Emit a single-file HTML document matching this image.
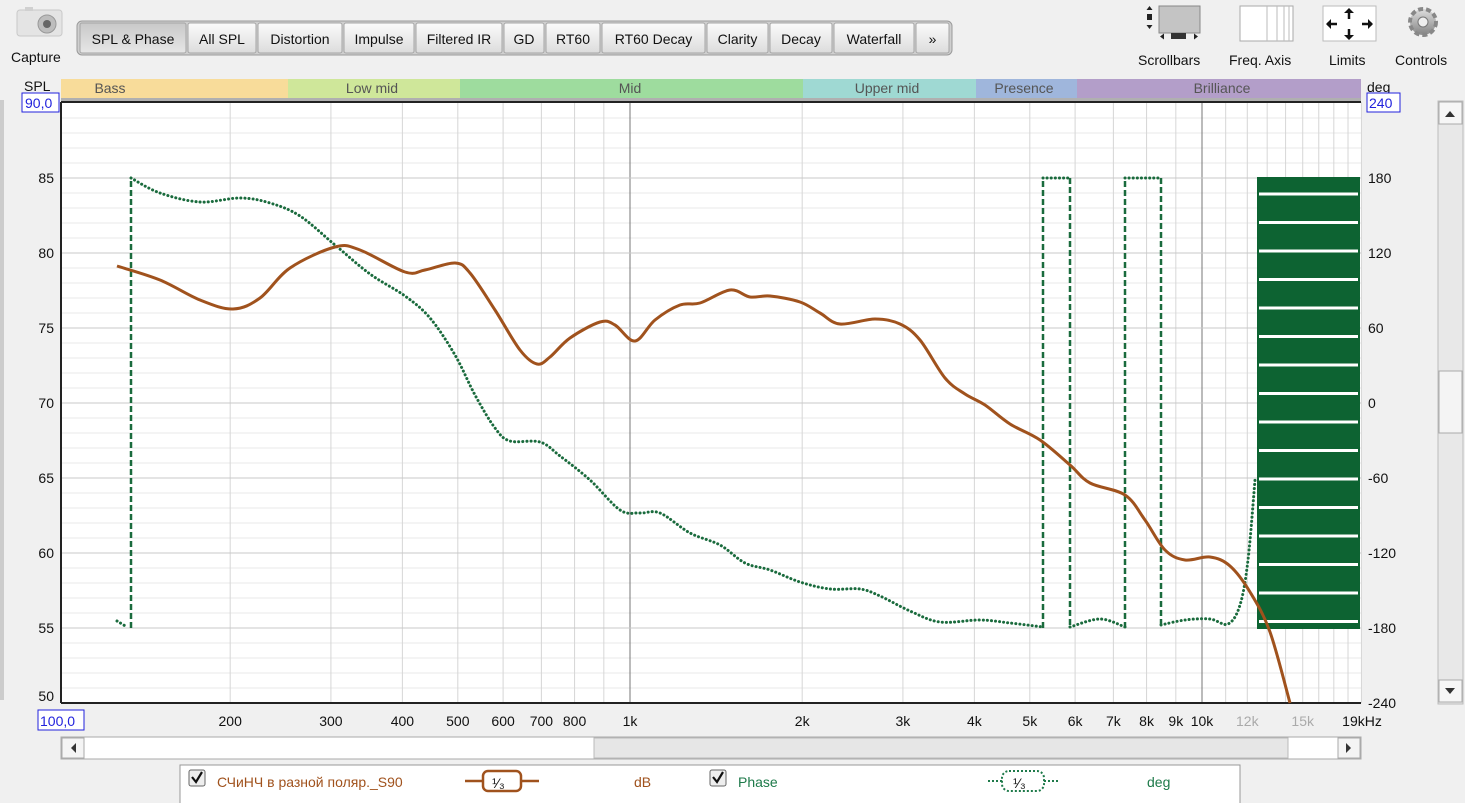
<!DOCTYPE html>
<html><head><meta charset="utf-8">
<style>
html,body{margin:0;padding:0;width:1465px;height:803px;overflow:hidden;background:#f0f0f0;font-family:"Liberation Sans",Arial,sans-serif;}
svg{position:absolute;left:0;top:0}
</style></head>
<body>
<svg id="s" width="1465" height="803" xmlns="http://www.w3.org/2000/svg" font-family="Liberation Sans, Arial, sans-serif">
<defs>
<linearGradient id="tab" x1="0" y1="0" x2="0" y2="1"><stop offset="0" stop-color="#fbfbfb"/><stop offset="1" stop-color="#dcdcdc"/></linearGradient>
<linearGradient id="tabS" x1="0" y1="0" x2="0" y2="1"><stop offset="0" stop-color="#c8c8c8"/><stop offset="1" stop-color="#e6e6e6"/></linearGradient>
<linearGradient id="gear" x1="0" y1="0" x2="0" y2="1"><stop offset="0" stop-color="#d8d8d8"/><stop offset="1" stop-color="#8a8a8a"/></linearGradient>
</defs>
<!-- capture icon -->
<rect x="17" y="10" width="45" height="26" rx="3" fill="#e4e4e4" stroke="#c9c9c9"/>
<rect x="25" y="7" width="8" height="4" fill="#d0d0d0"/>
<circle cx="47" cy="24" r="9" fill="#bdbdbd" stroke="#999"/>
<circle cx="47" cy="24" r="4" fill="#666"/>
<text x="11" y="62" font-size="14" fill="#111">Capture</text>
<!-- tabs -->
<rect x="77" y="21" width="875" height="34" rx="5" fill="#cfcfcf" stroke="#9a9a9a"/>
<g id="tabs"></g>
<!-- right icons -->
<rect x="1159" y="6" width="41" height="27" fill="#c4c4c4" stroke="#888"/>
<rect x="1147" y="14" width="5" height="6" fill="#222"/>
<path d="M1149.5 6 l-3 4 h6z M1149.5 29 l-3 -4 h6z M1160 36.5 l4 -3 v6z M1198 36.5 l-4 -3 v6z" fill="#222"/>
<rect x="1171" y="33" width="15" height="6" fill="#333"/>
<text x="1138" y="65" font-size="14" fill="#111">Scrollbars</text>
<rect x="1240" y="6" width="53" height="35" fill="#fff" stroke="#aaa"/>
<path d="M1267 6v35M1277 6v35M1284 6v35M1289 6v35" stroke="#bbb"/>
<text x="1229" y="65" font-size="14" fill="#111">Freq. Axis</text>
<rect x="1323" y="6" width="53" height="35" fill="#fff" stroke="#bbb"/>
<g stroke="#111" stroke-width="2.5" fill="none"><path d="M1327 24h10M1362 24h10M1349 10v9M1349 29v9"/></g>
<g fill="#111"><path d="M1326 24l5-5v10zM1373 24l-5-5v10zM1349 8l-5 5h10zM1349 40l-5-5h10z"/></g>
<text x="1329" y="65" font-size="14" fill="#111">Limits</text>
<circle cx="1423" cy="22" r="13" fill="url(#gear)" stroke="#888" stroke-dasharray="5 3" stroke-width="4"/>
<circle cx="1423" cy="22" r="11" fill="url(#gear)"/>
<circle cx="1423" cy="22" r="5" fill="#eee" stroke="#777"/>
<text x="1395" y="65" font-size="14" fill="#111">Controls</text>
<!-- bands -->
<g font-size="14" fill="#555" text-anchor="middle">
<rect x="61" y="79" width="227" height="19" fill="#f8dc9a"/><text x="110" y="93">Bass</text>
<rect x="288" y="79" width="172" height="19" fill="#cfe79a"/><text x="372" y="93">Low mid</text>
<rect x="460" y="79" width="343" height="19" fill="#9edc9e"/><text x="630" y="93">Mid</text>
<rect x="803" y="79" width="173" height="19" fill="#9fd9d3"/><text x="887" y="93">Upper mid</text>
<rect x="976" y="79" width="101" height="19" fill="#9fb6dc"/><text x="1024" y="93">Presence</text>
<rect x="1077" y="79" width="284" height="19" fill="#b39ec9"/><text x="1222" y="93">Brilliance</text>
</g>
<rect x="61" y="98" width="1300" height="3" fill="#b0b0b0"/>
<text x="24" y="91" font-size="14" fill="#111">SPL</text>
<text x="1367" y="92" font-size="14" fill="#111">deg</text>
<!-- plot -->
<rect x="61" y="102" width="1300" height="601" fill="#fff"/>
<g id="grid"></g>
<line x1="61" y1="102" x2="1361" y2="102" stroke="#222" stroke-width="2"/>
<line x1="61" y1="703" x2="1361" y2="703" stroke="#222" stroke-width="2"/>
<line x1="61" y1="102" x2="61" y2="703" stroke="#222" stroke-width="2"/>
<g id="curves"></g>
<g id="labels" font-size="14" fill="#111"></g>
<rect x="22" y="93" width="37" height="19" fill="#fff" stroke="#2222dd"/>
<text x="25" y="108" font-size="14" fill="#2222dd">90,0</text>
<rect x="1367" y="93" width="33" height="19" fill="#fff" stroke="#2222dd"/>
<text x="1369" y="108" font-size="14" fill="#2222dd">240</text>
<rect x="38" y="710" width="46" height="20" fill="#fff" stroke="#2222dd"/>
<text x="40" y="726" font-size="14" fill="#2222dd">100,0</text>
<!-- right scrollbar -->
<rect x="1438" y="101" width="25" height="603" fill="#e8e8e8" stroke="#bbb"/>
<rect x="1439" y="102" width="23" height="22" fill="#f6f6f6" stroke="#aaa"/>
<path d="M1445 117l5-6 5 6z" fill="#333"/>
<rect x="1439" y="371" width="23" height="62" fill="#f4f4f4" stroke="#aaa"/>
<rect x="1439" y="680" width="23" height="22" fill="#f6f6f6" stroke="#aaa"/>
<path d="M1445 688l5 6 5-6z" fill="#333"/>
<rect x="0" y="100" width="4" height="600" fill="#ccc"/>
<!-- bottom scrollbar -->
<rect x="61" y="737" width="1300" height="22" fill="#fff" stroke="#aaa"/>
<rect x="62" y="738" width="22" height="20" fill="#f4f4f4" stroke="#aaa"/>
<path d="M76 743l-5 5 5 5z" fill="#333"/>
<rect x="594" y="738" width="694" height="20" fill="#e6e6e6" stroke="#bbb"/>
<rect x="1338" y="738" width="22" height="20" fill="#f4f4f4" stroke="#aaa"/>
<path d="M1346 743l5 5-5 5z" fill="#333"/>
<!-- legend -->
<rect x="180" y="765" width="1060" height="40" fill="#fff" stroke="#999"/>
<rect x="189" y="770" width="16" height="16" rx="2" fill="#eee" stroke="#666"/>
<path d="M192 777l4 5 6-10" stroke="#111" stroke-width="2.2" fill="none"/>
<text x="217" y="787" font-size="14" fill="#a0521d">СЧиНЧ в разной поляр._S90</text>
<path d="M465 781h18M521 781h18" stroke="#a0521d" stroke-width="2.5"/>
<rect x="483" y="771" width="38" height="20" rx="5" fill="#fff" stroke="#a0521d" stroke-width="2.5"/>
<text x="492" y="788" font-size="14" fill="#111">¹⁄₃</text>
<text x="634" y="787" font-size="14" fill="#a0521d">dB</text>
<rect x="710" y="770" width="16" height="16" rx="2" fill="#eee" stroke="#666"/>
<path d="M713 777l4 5 6-10" stroke="#111" stroke-width="2.2" fill="none"/>
<text x="738" y="787" font-size="14" fill="#1e7a4a">Phase</text>
<path d="M988 781h14M1044 781h14" stroke="#1e7a4a" stroke-width="2" stroke-dasharray="2 2"/>
<rect x="1002" y="771" width="42" height="20" rx="7" fill="#fff" stroke="#1e7a4a" stroke-width="2" stroke-dasharray="2 2"/>
<text x="1013" y="788" font-size="14" fill="#111">¹⁄₃</text>
<text x="1147" y="787" font-size="14" fill="#1e7a4a">deg</text>
</svg>
<script>
var NS="http://www.w3.org/2000/svg";
function el(p,t,a,txt){var e=document.createElementNS(NS,t);for(var k in a)e.setAttribute(k,a[k]);if(txt!=null)e.textContent=txt;document.getElementById(p).appendChild(e);return e;}
function X(f){return 630+572*Math.log10(f/1000);}
// tabs
var tabs=[["SPL & Phase",79,187],["All SPL",187,257],["Distortion",257,343],["Impulse",343,415],["Filtered IR",415,503],["GD",503,545],["RT60",545,601],["RT60 Decay",601,706],["Clarity",706,769],["Decay",769,833],["Waterfall",833,915],["»",915,950]];
tabs.forEach(function(t,i){el("tabs","rect",{x:t[1]+1,y:23,width:t[2]-t[1]-2,height:30,rx:2,fill:i==0?"url(#tabS)":"url(#tab)",stroke:"#a5a5a5"});el("tabs","text",{x:(t[1]+t[2])/2,y:44,"font-size":14,fill:"#111","text-anchor":"middle"},t[0]);});
// grid
var fs=[];for(var f=200;f<=900;f+=100)fs.push(f);for(f=1000;f<=9000;f+=1000)fs.push(f);for(f=10000;f<=19000;f+=1000)fs.push(f);
for(var d=51;d<90;d++){if(d%5)el("grid","line",{x1:61,x2:1361,y1:703-(d-50)*15,y2:703-(d-50)*15,stroke:"#e8e8e8"});}
fs.forEach(function(f){var x=X(f);el("grid","line",{x1:x,x2:x,y1:102,y2:703,stroke:(f==1000||f==10000)?"#777":"#d6d6d6"});});
for(d=55;d<90;d+=5){el("grid","line",{x1:61,x2:1361,y1:703-(d-50)*15,y2:703-(d-50)*15,stroke:"#c8c8c8"});}
// labels
for(d=50;d<=85;d+=5){var y=703-(d-50)*15;el("labels","text",{x:54,y:y+(d==50?-2:5),"text-anchor":"end"},d);}
var ph=[180,120,60,0,-60,-120,-180,-240];ph.forEach(function(p){el("labels","text",{x:1368,y:403-p*1.25+5},p);});
var fl=[[200,"200"],[300,"300"],[400,"400"],[500,"500"],[600,"600"],[700,"700"],[800,"800"],[1000,"1k"],[2000,"2k"],[3000,"3k"],[4000,"4k"],[5000,"5k"],[6000,"6k"],[7000,"7k"],[8000,"8k"],[9000,"9k"],[10000,"10k"],[12000,"12k"],[15000,"15k"]];
fl.forEach(function(a){var t=el("labels","text",{x:X(a[0]),y:726,"text-anchor":"middle"},a[1]);if(a[0]==12000||a[0]==15000)t.setAttribute("fill","#aaa");});
el("labels","text",{x:1362,y:726,"text-anchor":"middle"},"19kHz");
// smooth path
function smooth(p){var s="M"+p[0][0]+" "+p[0][1];for(var i=0;i<p.length-1;i++){var p0=p[i-1]||p[i],p1=p[i],p2=p[i+1],p3=p[i+2]||p2;s+=" C"+(p1[0]+(p2[0]-p0[0])/6)+" "+(p1[1]+(p2[1]-p0[1])/6)+" "+(p2[0]-(p3[0]-p1[0])/6)+" "+(p2[1]-(p3[1]-p1[1])/6)+" "+p2[0]+" "+p2[1];}return s;}
// phase dense block
el("curves","rect",{x:1257,y:177,width:103,height:452,fill:"#0d6332"});
for(var yy=194;yy<628;yy+=28.5)el("curves","line",{x1:1259,x2:1358,y1:yy,y2:yy,stroke:"#fff","stroke-width":3});
var G="#1a6b3d";
function dash(a){el("curves","path",{d:a,stroke:G,"stroke-width":2.5,fill:"none","stroke-dasharray":"6 3"});}
function dot(pts){el("curves","path",{d:smooth(pts),stroke:G,"stroke-width":3,fill:"none","stroke-dasharray":"0.1 4","stroke-linecap":"round"});}
dot([[117,621],[127,627]]);
dash("M131 628V178");
dot([[131,178],[160,193],[200,202],[240,198],[270,203],[300,216],[335,245],[370,274],[405,296],[430,318],[455,355],[475,395],[495,428],[510,441],[540,442],[560,456],[590,480],[620,510],[640,513],[660,513],[690,533],[720,545],[745,563],[770,570],[800,582],[830,589],[860,589],[880,596],[910,611],[940,622],[980,620],[1010,623],[1043,627]]);
dash("M1043 628V178M1070 178V628M1125 628V178M1161 178V628");
dot([[1043,178],[1070,178]]);dot([[1070,627],[1100,619],[1125,627]]);dot([[1125,178],[1161,178]]);
dot([[1161,625],[1185,620],[1210,619],[1228,624],[1240,605],[1248,560],[1255,480]]);
// SPL
var spl=[[117,266],[160,280],[200,300],[233,309],[260,298],[290,268],[335,247],[360,250],[405,272],[425,270],[455,263],[470,273],[495,310],[520,350],[537,364],[550,357],[570,338],[600,322],[615,325],[635,341],[655,320],[680,305],[700,303],[730,290],[750,297],[770,296],[800,302],[820,313],[840,324],[875,319],[900,324],[920,340],[945,378],[965,394],[985,405],[1010,424],[1040,440],[1070,465],[1090,483],[1125,495],[1145,520],[1165,550],[1185,560],[1210,557],[1230,566],[1250,592],[1270,632],[1290,703]];
el("curves","path",{d:smooth(spl),stroke:"#a0521d","stroke-width":3,fill:"none","stroke-linejoin":"round"});
</script>
</body></html>
